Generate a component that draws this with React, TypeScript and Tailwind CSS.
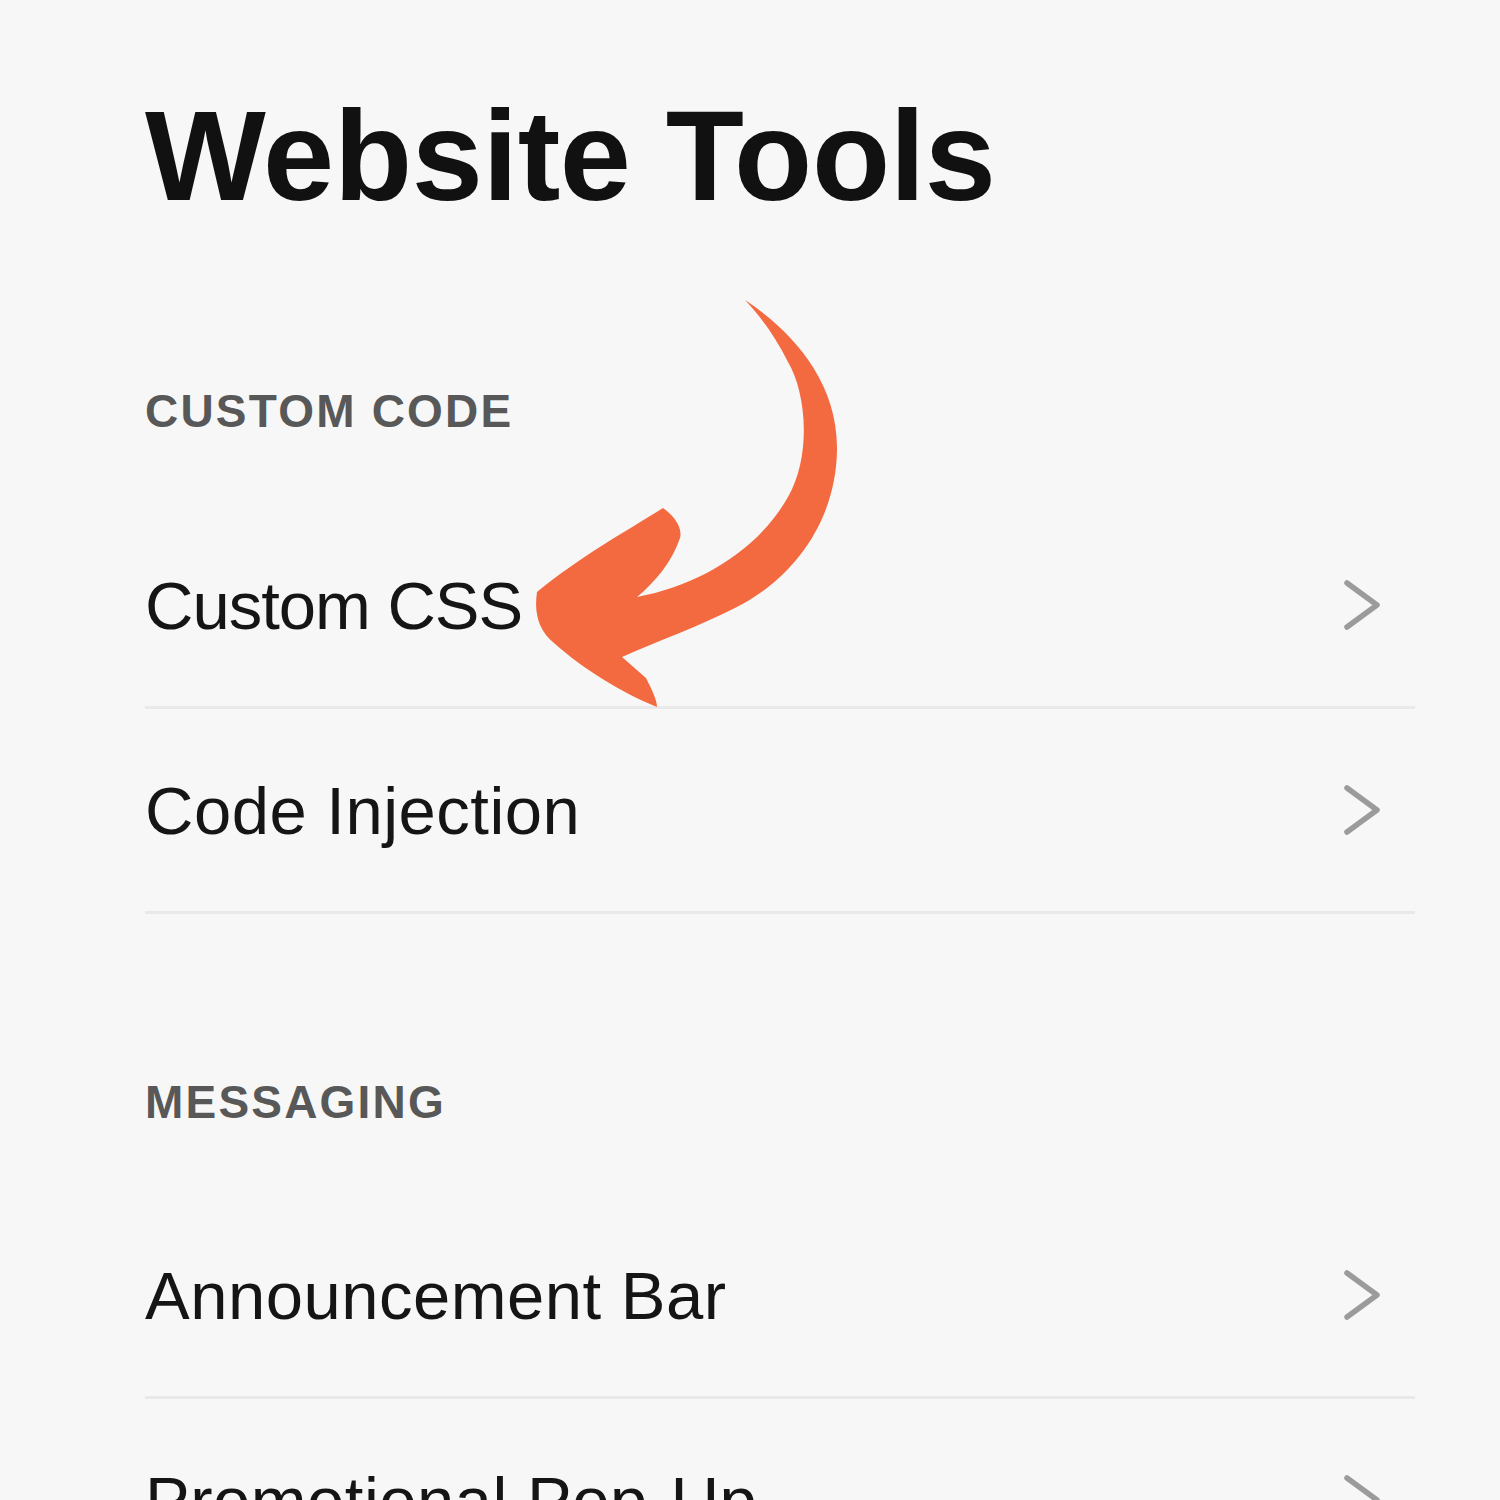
import React from "react";

const font = { fontFamily: '"Liberation Sans", Arial, sans-serif' };

function Chevron() {
  return (
    <svg width="38" height="52" viewBox="0 0 38 52" fill="none">
      <polyline
        points="4,4 34,26 4,48"
        stroke="#9b9b9b"
        strokeWidth="5.5"
        strokeLinecap="round"
        strokeLinejoin="round"
      />
    </svg>
  );
}

function Row({ label, tight }: { label: string; tight?: boolean }) {
  return (
    <div className="flex items-center justify-between h-[205px] border-b-[3px] border-[#e9e9e9] pr-[34px]">
      <span
        className={
          tight
            ? "text-[67px] leading-none text-[#151515] tracking-[-1px] whitespace-nowrap"
            : "text-[67px] leading-none text-[#151515] tracking-[0.5px] whitespace-nowrap"
        }
      >
        {label}
      </span>
      <Chevron />
    </div>
  );
}

function SectionLabel({ children }: { children: React.ReactNode }) {
  return (
    <div className="text-[46px] leading-none font-bold text-[#585858] tracking-[2.2px] uppercase">
      {children}
    </div>
  );
}

export default function App() {
  return (
    <div className="relative w-[1500px] h-[1500px] overflow-hidden bg-[#f7f7f7]" style={font}>
      <div className="pl-[145px] pr-[85px] pt-[92px]">
        <h1 className="text-[128px] leading-none font-bold text-[#111] tracking-[-0.4px]">Website Tools</h1>

        <div className="mt-[168px]">
          <SectionLabel>Custom Code</SectionLabel>
        </div>
        <div className="mt-[70px]">
          <Row label="Custom CSS" tight />
          <Row label="Code Injection" />
        </div>

        <div className="mt-[165px]">
          <SectionLabel>Messaging</SectionLabel>
        </div>
        <div className="mt-[69px]">
          <Row label="Announcement Bar" />
          <Row label="Promotional Pop-Up" />
        </div>
      </div>

      {/* orange arrow pointing at Custom CSS */}
      <svg
        className="absolute left-0 top-0 pointer-events-none"
        width="1500"
        height="1500"
        viewBox="0 0 1500 1500"
      >
        <path
          fill="#f46a40"
          d="M 745 300
             C 790 330, 838 380, 837 450
             C 836 520, 795 578, 735 608
             C 700 626, 660 640, 622 657
             L 646 678
             C 652 690, 657 700, 657 707
             C 620 692, 582 668, 554 643
             C 538 630, 534 612, 537 592
             C 578 558, 628 530, 663 508
             C 673 515, 683 527, 680 538
             C 672 562, 655 582, 637 597
             C 700 585, 758 550, 788 497
             C 812 455, 806 392, 788 362
             C 775 336, 760 316, 745 300 Z"
        />
      </svg>
    </div>
  );
}
